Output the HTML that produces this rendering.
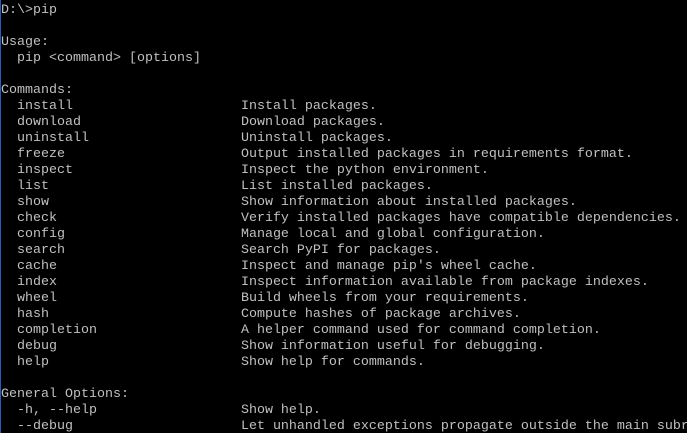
<!DOCTYPE html>
<html><head><style>
html,body{margin:0;padding:0;background:#000;width:687px;height:433px;overflow:hidden}
body{border-left:1px solid #1e5fc0;box-sizing:border-box}
pre{margin:0;padding:3px 0 0 0;color:#c0c0c0;font-family:"Liberation Mono",monospace;font-size:13.33px;line-height:16px;white-space:pre;width:686px;height:430px;overflow:hidden}
</style></head><body><pre>D:\&gt;pip

Usage:
  pip &lt;command&gt; [options]

Commands:
  install                     Install packages.
  download                    Download packages.
  uninstall                   Uninstall packages.
  freeze                      Output installed packages in requirements format.
  inspect                     Inspect the python environment.
  list                        List installed packages.
  show                        Show information about installed packages.
  check                       Verify installed packages have compatible dependencies.
  config                      Manage local and global configuration.
  search                      Search PyPI for packages.
  cache                       Inspect and manage pip's wheel cache.
  index                       Inspect information available from package indexes.
  wheel                       Build wheels from your requirements.
  hash                        Compute hashes of package archives.
  completion                  A helper command used for command completion.
  debug                       Show information useful for debugging.
  help                        Show help for commands.

General Options:
  -h, --help                  Show help.
  --debug                     Let unhandled exceptions propagate outside the main subr</pre></body></html>
